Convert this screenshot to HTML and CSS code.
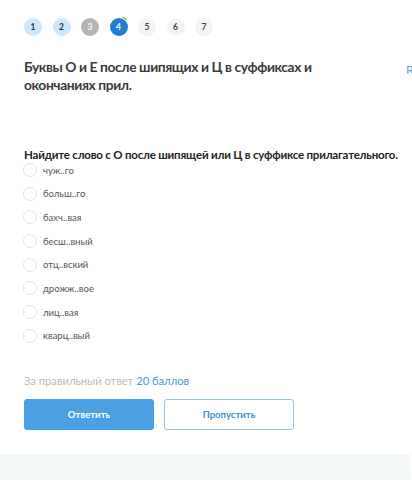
FILE: index.html
```html
<!DOCTYPE html>
<html lang="ru">
<head>
<meta charset="utf-8">
<link rel="stylesheet" href="styles.css">
</head>
<body>
<div class="page">
  <main class="task">
    <nav class="steps">
      <span class="step done">1</span>
      <span class="step done">2</span>
      <span class="step skipped">3</span>
      <span class="step current">4<i class="mark"></i></span>
      <span class="step">5</span>
      <span class="step">6</span>
      <span class="step">7</span>
    </nav>
    <div class="head">
      <h1 class="title">Буквы О и Е после шипящих и Ц в суффиксах и окончаниях прил.</h1>
      <a class="report">Report</a>
    </div>
    <p class="question">Найдите слово с О после шипящей или Ц в суффиксе прилагательного.</p>
    <ul class="options">
      <li class="option"><span class="radio"></span>чуж..го</li>
      <li class="option"><span class="radio"></span>больш..го</li>
      <li class="option"><span class="radio"></span>бахч..вая</li>
      <li class="option"><span class="radio"></span>бесш..вный</li>
      <li class="option"><span class="radio"></span>отц..вский</li>
      <li class="option"><span class="radio"></span>дрожж..вое</li>
      <li class="option"><span class="radio"></span>лиц..вая</li>
      <li class="option"><span class="radio"></span>кварц..вый</li>
    </ul>
    <p class="points">За правильный ответ <span class="accent">20 баллов</span></p>
    <div class="actions">
      <button class="btn primary">Ответить</button>
      <button class="btn secondary">Пропустить</button>
    </div>
  </main>
  <footer class="foot"></footer>
</div>
</body>
</html>
```
FILE: styles.css
```css
* { box-sizing: border-box; }
html, body { margin: 0; padding: 0; background: #fff; }
body {
  font-family: Lato, "Open Sans", sans-serif;
  color: #333;
  width: 412px;
  height: 480px;
  overflow: hidden;
}
.page { display: flex; flex-direction: column; }
.task { padding: 18px 0 0 24px; }
.steps { display: flex; gap: 10.5px; }
.step {
  position: relative;
  width: 18px; height: 18px;
  border-radius: 50%;
  background: #f3f3f3;
  color: #444;
  font-size: 8.5px;
  font-weight: 700;
  display: flex; align-items: center; justify-content: center;
}
.step.done { background: #cfe7fb; color: #333; }
.step.skipped { background: #b4b4b4; color: #f4f4f4; }
.step.current { background: #1f7fd1; color: #fff; }
.mark {
  position: absolute;
  top: -1px; right: 1px;
  width: 6px; height: 4px;
  border-top: 2px solid #8fcf3a;
  border-radius: 50% 50% 0 0;
  transform: rotate(35deg);
}
.head { display: flex; gap: 78px; margin-top: 22px; width: 460px; }
.title {
  margin: 0;
  width: 304px;
  flex: none;
  font-size: 13.8px;
  font-weight: 700;
  letter-spacing: -0.4px;
  line-height: 18px;
  color: #3a3a3a;
}
.report { color: #5aa7e6; font-size: 12px; margin-top: 4px; }
.question {
  margin: 54px 0 0;
  font-size: 11.5px;
  font-weight: 700;
  color: #222;
  line-height: 14px;
  letter-spacing: -0.2px;
  white-space: nowrap;
}
.options { list-style: none; margin: 1px 0 0; padding: 0; display: flex; flex-direction: column; gap: 9.7px; }
.option {
  display: flex; align-items: center; gap: 6px;
  height: 14px;
  font-size: 9.5px;
  color: #555;
  margin-left: -1px;
}
.radio {
  width: 14px; height: 14px;
  border-radius: 50%;
  border: 1px solid #e2e2e2;
  background: #fff;
  flex: none;
}
.points { margin: 31px 0 0; font-size: 11.2px; color: #b8bcbf; line-height: 14px; }
.accent { color: #4a9ad6; }
.actions { display: flex; gap: 10px; margin-top: 11px; }
.btn {
  width: 130px; height: 31px;
  border-radius: 3px;
  font-family: inherit;
  font-size: 9.5px;
  font-weight: 700;
  cursor: pointer;
}
.btn.primary { background: #4aa0e2; border: 1px solid #4aa0e2; color: #fff; }
.btn.secondary { background: #fff; border: 1px solid #8fc4ec; color: #3d8ed0; }
.foot { margin-top: 24px; height: 30px; background: #f4f7f8; width: 410px; }
```
